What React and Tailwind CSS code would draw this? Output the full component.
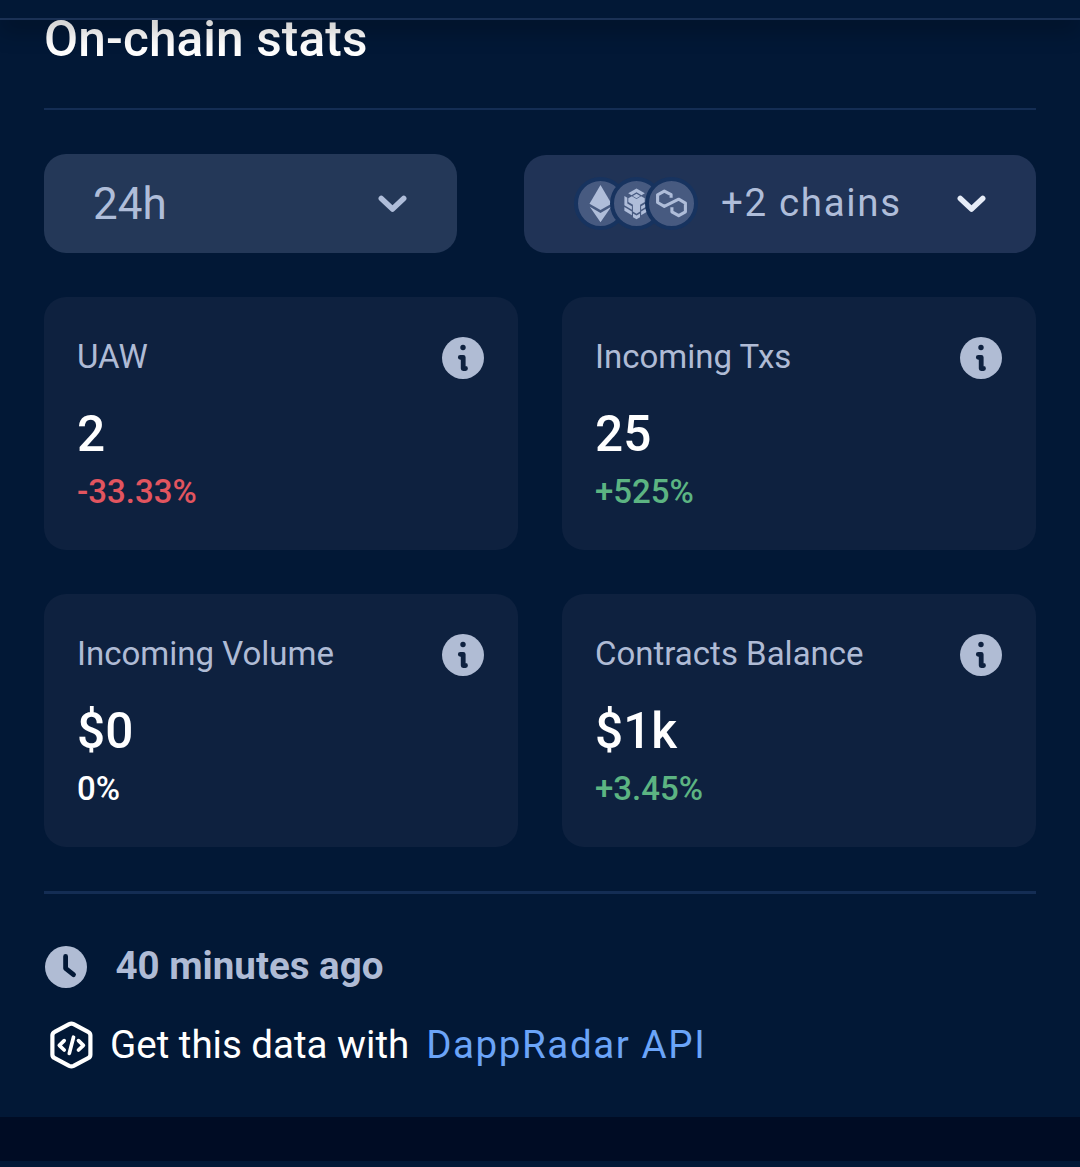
import React from 'react';

function InfoIcon() {
  return (
    <svg className="block size-[42px] shrink-0" viewBox="0 0 42 42" fill="none">
      <circle cx="21" cy="21" r="21" fill="#b0bcd4" />
      <circle cx="21" cy="10.5" r="2.7" fill="#0e213f" />
      <path d="M18.3 20.3h2.900v11.200h2.300" stroke="#0e213f" strokeWidth="4.8" strokeLinecap="round" strokeLinejoin="round" />
    </svg>
  );
}

function Chevron({ className }) {
  return (
    <svg className={`block h-[18px] w-[30px] shrink-0 ${className}`} viewBox="0 0 30 18" fill="none">
      <path d="M3.300 3.500 14.500 14 25.700 3.500" stroke="currentColor" strokeWidth="5.5" strokeLinecap="round" strokeLinejoin="round" />
    </svg>
  );
}

function ChainBadge({ className = '', children }) {
  return (
    <span className={`block size-[53px] shrink-0 rounded-full border-4 border-[#17335f] bg-[#475a80] ${className}`}>
      <svg className="block size-[45px]" viewBox="0 0 45 45" fill="#afbdd9">
        {children}
      </svg>
    </span>
  );
}

function StatCard({ label, value, change, tone }) {
  return (
    <div className="h-[253px] rounded-[22px] bg-[#0e213f] px-[33px] pt-[40px]">
      <div className="flex h-[42px] items-start justify-between pr-px">
        <span className="text-[33px] leading-[40px] text-[#afbbd5]">{label}</span>
        <InfoIcon />
      </div>
      <div className="mt-[26px] text-[49.5px] leading-[58px] font-medium text-white">{value}</div>
      <div className={`mt-[9px] text-[33px] leading-[40px] font-medium ${tone}`}>{change}</div>
    </div>
  );
}

const stats = [
  { label: 'UAW', value: '2', change: '-33.33%', tone: 'text-[#e2555f]' },
  { label: 'Incoming Txs', value: '25', change: '+525%', tone: 'text-[#5cb482]' },
  { label: 'Incoming Volume', value: '$0', change: '0%', tone: 'text-white' },
  { label: 'Contracts Balance', value: '$1k', change: '+3.45%', tone: 'text-[#5cb482]' },
];

export default function App() {
  return (
    <div className="flex h-[1167px] w-[1080px] flex-col overflow-hidden bg-[#021836] font-[Roboto,sans-serif]">
      <header className="relative z-10 h-[20px] shrink-0 border-b-2 border-[#1b3155] bg-[#021836] shadow-[0_11px_22px_rgba(0,0,0,0.25)]" />
      <main className="h-[1097px] shrink-0 px-[44px]">
        <h1 className="-mt-[10px] h-[100px] border-b-2 border-[#142d54] text-[49.5px] leading-[58px] font-medium tracking-[0.14px] text-white">
          On-chain stats
        </h1>

        <div className="mt-[44px] flex h-[99px] items-end justify-between">
          <button className="flex h-[99px] w-[413px] items-center justify-between rounded-[22px] bg-[#243858] pr-[49px] pl-[49px] text-[44px] leading-[52px] text-[#afbdd9]">
            <span>24h</span>
            <Chevron className="text-[#afbdd9]" />
          </button>
          <button className="flex h-[98px] w-[512px] items-center rounded-[22px] bg-[#203356] pr-[49px] pl-[50px] text-[#afbdd9]">
            <span className="flex pb-px">
              <ChainBadge>
                <path d="M22.5 4 33.5 22.8 22.5 29 11.5 22.8Z" />
                <path d="m11.8 25.8 10.7 6.3 10.7-6.3-10.7 15.5Z" />
              </ChainBadge>
              <ChainBadge className="-ml-[17.5px]">
                <path d="m22.5 7.500 8.300 4.700-3.300 2-5-2.900-5 2.900-3.300-2Z" />
                <path d="m22.5 12.800 3.800 2.200-3.800 2.200-3.800-2.200Z" />
                <path d="m14.3 17.300 3.600-2 4.600 2.800 4.600-2.800 3.600 2v3.700l-4.600 2.800v6.700l-3.600 2.200-3.600-2.200v-6.700l-4.600-2.800Z" />
                <path d="m10.4 15 2.900 1.700v5.700l4.600 2.800v3.500l-7.500-4.500Z" />
                <path d="m34.6 15-2.900 1.700v5.700l-4.600 2.800v3.500l7.500-4.500Z" />
                <path d="m10.4 26 7.500 4.500v3.700l-7.500-4.400Z" />
                <path d="m34.6 26-7.500 4.500v3.700l7.500-4.400Z" />
                <path d="m19 32.600 3.500 2 3.500-2v3.700l-3.500 2-3.500-2Z" />
              </ChainBadge>
              <ChainBadge className="-ml-[17.5px]">
                <path
                  d="M22.100 16.800v-3.100L15.300 10.100 8.600 13.800v7.700l6.700 3.900 14.400-7.200 6.700 3.900v8.700l-6.700 3.900-6.800-3.900v-4.600"
                  fill="none"
                  stroke="#afbdd9"
                  strokeWidth="3.100"
                  strokeLinejoin="round"
                />
              </ChainBadge>
            </span>
            <span className="ml-[23px] pb-[2px] text-[38.5px] leading-[46px] tracking-[1.65px] whitespace-nowrap">+2 chains</span>
            <Chevron className="ml-auto text-[#e6ecf7]" />
          </button>
        </div>

        <section className="mt-[44px] grid grid-cols-2 gap-[44px]">
          {stats.map((s) => (
            <StatCard key={s.label} {...s} />
          ))}
        </section>

        <footer className="mt-[44px] border-t-[3px] border-[#142d54]">
          <div className="mt-[52px] flex h-[42px] items-center pl-px">
            <svg className="block size-[42px]" viewBox="0 0 42 42" fill="none">
              <circle cx="21" cy="21" r="21" fill="#b0bcd4" />
              <path d="M20.6 10.5v11.8l7.900 6.400" stroke="#021836" strokeWidth="4.8" strokeLinecap="round" strokeLinejoin="round" />
            </svg>
            <span className="ml-[28.5px] pb-[2px] text-[38.5px] leading-[46px] font-bold text-[#afbbd5]">40 minutes ago</span>
          </div>
          <div className="mt-[33px] flex h-[48px] items-center pl-[5px]">
            <svg className="block h-[48px] w-[44px]" viewBox="0 0 44 48" fill="none" stroke="#fff" strokeLinecap="round" strokeLinejoin="round">
              <path d="M20.2 3.2a5 5 0 0 1 4.4 0l14.5 7.6a4 4 0 0 1 2.3 3.7v19a4 4 0 0 1-2.300 3.700l-14.500 7.600a5 5 0 0 1-4.400 0L5.700 37.200A4 4 0 0 1 3.400 33.500v-19a4 4 0 0 1 2.300-3.700Z" strokeWidth="4.2" />
              <path d="m15.200 19.600-4.900 4.700 4.900 4.700M29.500 19.600l4.900 4.700-4.900 4.700M24.500 16.200l-4.200 16.200" strokeWidth="3.7" />
            </svg>
            <span className="ml-[17px] text-[38.5px] leading-[46px] whitespace-nowrap text-white">Get this data with</span>
            <a className="ml-[17px] text-[38.5px] leading-[46px] tracking-[1.6px] whitespace-nowrap text-[#6ba4f8]">DappRadar API</a>
          </div>
        </footer>
      </main>
      <div className="h-[44px] shrink-0 bg-[#000c24]" />
    </div>
  );
}
